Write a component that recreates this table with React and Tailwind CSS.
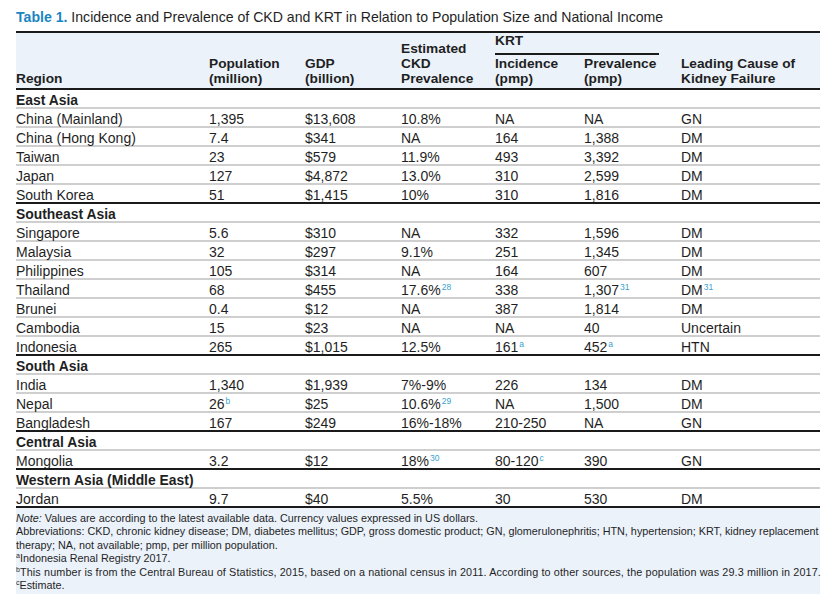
const sections = [
  {
    name: "East Asia",
    rows: [
      ["China (Mainland)", "1,395", "$13,608", "10.8%", "NA", "NA", "GN"],
      ["China (Hong Kong)", "7.4", "$341", "NA", "164", "1,388", "DM"],
      ["Taiwan", "23", "$579", "11.9%", "493", "3,392", "DM"],
      ["Japan", "127", "$4,872", "13.0%", "310", "2,599", "DM"],
      ["South Korea", "51", "$1,415", "10%", "310", "1,816", "DM"],
    ],
  },
  {
    name: "Southeast Asia",
    rows: [
      ["Singapore", "5.6", "$310", "NA", "332", "1,596", "DM"],
      ["Malaysia", "32", "$297", "9.1%", "251", "1,345", "DM"],
      ["Philippines", "105", "$314", "NA", "164", "607", "DM"],
      ["Thailand", "68", "$455", ["17.6%", "28"], "338", ["1,307", "31"], ["DM", "31"]],
      ["Brunei", "0.4", "$12", "NA", "387", "1,814", "DM"],
      ["Cambodia", "15", "$23", "NA", "NA", "40", "Uncertain"],
      ["Indonesia", "265", "$1,015", "12.5%", ["161", "a"], ["452", "a"], "HTN"],
    ],
  },
  {
    name: "South Asia",
    rows: [
      ["India", "1,340", "$1,939", "7%-9%", "226", "134", "DM"],
      ["Nepal", ["26", "b"], "$25", ["10.6%", "29"], "NA", "1,500", "DM"],
      ["Bangladesh", "167", "$249", "16%-18%", "210-250", "NA", "GN"],
    ],
  },
  {
    name: "Central Asia",
    rows: [["Mongolia", "3.2", "$12", ["18%", "30"], ["80-120", "c"], "390", "GN"]],
  },
  {
    name: "Western Asia (Middle East)",
    rows: [["Jordan", "9.7", "$40", "5.5%", "30", "530", "DM"]],
  },
];

const gridCols = "grid grid-cols-[193px_96px_96px_94px_89px_97px_1fr]";

const Value = ({ v }) =>
  Array.isArray(v) ? (
    <>
      {v[0]}
      <sup className="ml-px text-[8.5px] text-[#3a9fd2] align-baseline relative -top-[5px]">{v[1]}</sup>
    </>
  ) : (
    v
  );

export default function App() {
  return (
    <div className="w-[831px] h-[604px] bg-white pt-[8px] font-['Liberation_Sans',Arial,sans-serif] text-[#1f1f1f]">
      {/* Caption */}
      <div className="ml-[16px] h-[18px] mb-[5px] text-[14.1px] leading-[18px] whitespace-nowrap">
        <span className="font-bold text-[#1a85c2]">Table 1.</span>{" "}
        Incidence and Prevalence of CKD and KRT in Relation to Population Size and National Income
      </div>

      <div className="ml-[16px] w-[804px]">
        {/* Header */}
        <div className={`${gridCols} border-t-2 border-b-2 border-[#1a1a1a] bg-[#ebf2fa] h-[59px] text-[13.7px] leading-[15px] font-bold`}>
          <div className="col-start-1 row-start-1 row-span-2 self-end pb-[2px]">Region</div>
          <div className="col-start-2 row-start-1 row-span-2 self-end pb-[2px]">
            Population<br />(million)
          </div>
          <div className="col-start-3 row-start-1 row-span-2 self-end pb-[2px]">
            GDP<br />(billion)
          </div>
          <div className="col-start-4 row-start-1 row-span-2 self-end pb-[2px]">
            Estimated<br />CKD<br />Prevalence
          </div>
          <div className="col-start-5 col-span-2 row-start-1 mr-[22px] pb-[3px] border-b-2 border-[#1a1a1a]">KRT</div>
          <div className="col-start-5 row-start-2 self-end pb-[2px]">
            Incidence<br />(pmp)
          </div>
          <div className="col-start-6 row-start-2 self-end pb-[2px]">
            Prevalence<br />(pmp)
          </div>
          <div className="col-start-7 row-start-1 row-span-2 self-end pb-[2px]">
            Leading Cause of<br />Kidney Failure
          </div>
        </div>

        {/* Body */}
        {sections.map((s) => (
          <div key={s.name}>
            <div className="h-[19px] pt-[3px] border-b-2 border-[#cfcfcf] text-[13.9px] leading-[14px] font-bold">
              {s.name}
            </div>
            {s.rows.map((r, ri) => {
              const last = ri === s.rows.length - 1;
              return (
                <div
                  key={r[0]}
                  className={`${gridCols} h-[19px] pt-[3px] border-b-2 text-[14px] leading-[14px] whitespace-nowrap ${
                    last ? "border-[#1a1a1a]" : "border-[#cfcfcf]"
                  }`}
                >
                  {r.map((v, ci) => (
                    <div key={ci}>
                      <Value v={v} />
                    </div>
                  ))}
                </div>
              );
            })}
          </div>
        ))}

        {/* Footnotes */}
        <div className="bg-[#ebf2fa] pt-[4px] pb-[2px] text-[10.8px] leading-[13.4px] whitespace-nowrap">
          <div>
            <span className="italic">Note:</span> Values are according to the latest available data. Currency values expressed in US dollars.
          </div>
          <div>
            Abbreviations: CKD, chronic kidney disease; DM, diabetes mellitus; GDP, gross domestic product; GN, glomerulonephritis; HTN, hypertension; KRT, kidney replacement
            <br />
            therapy; NA, not available; pmp, per million population.
          </div>
          <div>
            <sup className="text-[7px] align-baseline relative -top-[4px]">a</sup>Indonesia Renal Registry 2017.
          </div>
          <div className="tracking-[0.12px]">
            <sup className="text-[7px] align-baseline relative -top-[4px]">b</sup>This number is from the Central Bureau of Statistics, 2015, based on a national census in 2011. According to other sources, the population was 29.3 million in 2017.
          </div>
          <div>
            <sup className="text-[7px] align-baseline relative -top-[4px]">c</sup>Estimate.
          </div>
        </div>
      </div>
    </div>
  );
}
